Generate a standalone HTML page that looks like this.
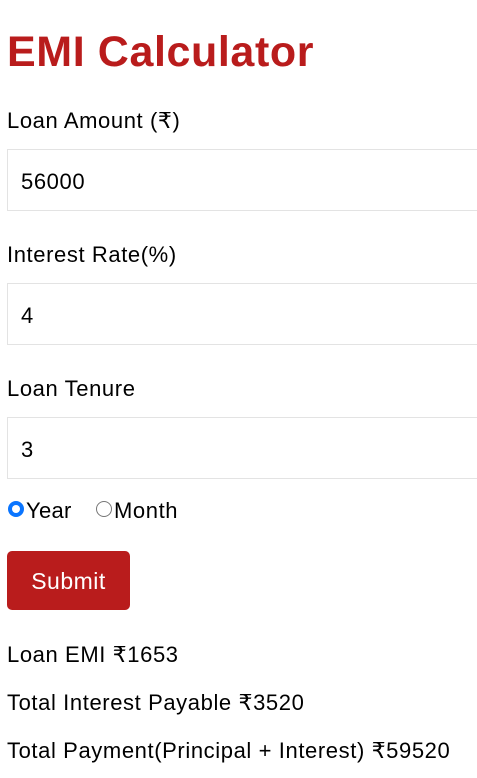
<!DOCTYPE html>
<html><head><meta charset="utf-8"><style>
body{margin:0;width:477px;height:778px;overflow:hidden;background:#fff;font-family:"Liberation Sans",sans-serif;color:#000;position:relative}
.a{position:absolute;white-space:nowrap}
h1{position:absolute;left:7px;top:24px;margin:0;font-size:43px;font-weight:bold;color:#b91c1c;line-height:56px;letter-spacing:0.6px}
.l{font-size:22px;line-height:24px;left:7px;letter-spacing:0.6px}
.in{position:absolute;left:7px;width:480px;height:62px;border:1px solid #e3e3e3;box-sizing:border-box;border-right:none}
.in span{position:absolute;left:13px;top:20px;font-size:22px;line-height:24px;letter-spacing:0.6px}
.r{position:absolute;width:16px;height:16px;border-radius:50%;box-sizing:border-box}
.btn{position:absolute;left:7px;top:551px;width:123px;height:59px;background:#b91c1c;border-radius:5px;color:#fff;font-size:23px;line-height:61px;text-align:center;letter-spacing:0.5px}
</style></head><body>
<h1>EMI Calculator</h1>
<div class="a l" style="top:109px">Loan Amount (₹)</div>
<div class="in" style="top:149px"><span>56000</span></div>
<div class="a l" style="top:243px">Interest Rate(%)</div>
<div class="in" style="top:283px"><span>4</span></div>
<div class="a l" style="top:377px">Loan Tenure</div>
<div class="in" style="top:417px"><span>3</span></div>
<div class="r" style="left:8px;top:501px;background:#0a75ff"></div>
<div class="r" style="left:12px;top:505px;width:8px;height:8px;background:#fff"></div>
<div class="a l" style="left:26px;top:499px;letter-spacing:0.3px">Year</div>
<div class="r" style="left:96px;top:501px;border:1.5px solid #777;background:#fff"></div>
<div class="a l" style="left:114px;top:499px">Month</div>
<div class="btn">Submit</div>
<div class="a l" style="top:643px">Loan EMI ₹1653</div>
<div class="a l" style="top:691px">Total Interest Payable ₹3520</div>
<div class="a l" style="top:739px">Total Payment(Principal + Interest) ₹59520</div>
</body></html>
